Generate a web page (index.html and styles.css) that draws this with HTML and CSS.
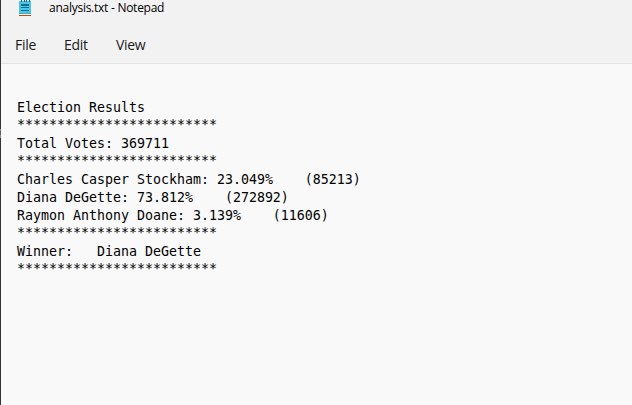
FILE: index.html
```html
<!DOCTYPE html>
<html lang="en">
<head>
<meta charset="utf-8">
<title>analysis.txt - Notepad</title>
<link rel="stylesheet" href="styles.css">
</head>
<body>
<div class="window">
  <header class="titlebar">
    <svg class="app-icon" width="12" height="16" viewBox="0 0 12 16" shape-rendering="crispEdges">
      <rect x="0" y="1" width="12" height="13" fill="#50c4e4"/>
      <rect x="0" y="13" width="12" height="1" fill="#36abd0"/>
      <path d="M2 0h1v2h-1zM5 0h1v2h-1zM7 0h1v2h-1zM10 0h1v2h-1z" fill="#176989"/>
      <path d="M2 4h8v2h-8zM2 7h8v1h-8zM2 10h8v1h-8z" fill="#08718f"/>
      <rect x="0" y="15" width="12" height="1" fill="#b0520c"/>
    </svg>
    <span class="title">analysis.txt - Notepad</span>
  </header>
  <nav class="menu">
    <span class="item file">File</span>
    <span class="item edit">Edit</span>
    <span class="item view">View</span>
  </nav>
  <main class="editor"><pre class="text">Election Results
<span class="stars">*************************</span>
Total Votes: 369711
<span class="stars">*************************</span>
Charles Casper Stockham: 23.049%    (85213)
Diana DeGette: 73.812%    (272892)
Raymon Anthony Doane: 3.139%    (11606)
<span class="stars">*************************</span>
Winner:   Diana DeGette
<span class="stars">*************************</span></pre></main>
</div>
</body>
</html>
```
FILE: styles.css
```css
* { box-sizing: border-box; }
body {
  margin: 0;
  overflow: hidden;
  /* strip of the desktop visible beside the window */
  background: linear-gradient(#343436 129px, #8a8a8a 129px 131px, #5a5a5c 131px 135px, #8a8a8a 135px 138px, #343436 138px);
}
.window {
  height: 405px;
  margin-left: 1px;
  display: flex;
  flex-direction: column;
  background: #f2f2f2;
  color: #000;
}
.titlebar {
  display: flex;
  height: 27px;
  padding-left: 18px;
  gap: 18px;
}
.app-icon { flex: none; }
.title {
  font: 12px/16px "Open Sans", sans-serif;
  letter-spacing: -0.26px;
  white-space: nowrap;
}
.menu {
  display: flex;
  height: 37px;
  padding-left: 14px;
  border-bottom: 1px solid #e4e4e4;
  font: 14px/36px "Open Sans", sans-serif;
  color: #1b1b1b;
}
.file { width: 49px; }
.edit { width: 52px; }
.item { letter-spacing: -0.3px; }
.editor {
  flex: 1;
  padding: 35px 0 0 16px;
  background: #f9f9f9;
}
.text {
  margin: 0;
  font: 13.29px/18px "DejaVu Sans Mono", monospace;
}
.stars {
  position: relative;
  top: -1px;
}
```
